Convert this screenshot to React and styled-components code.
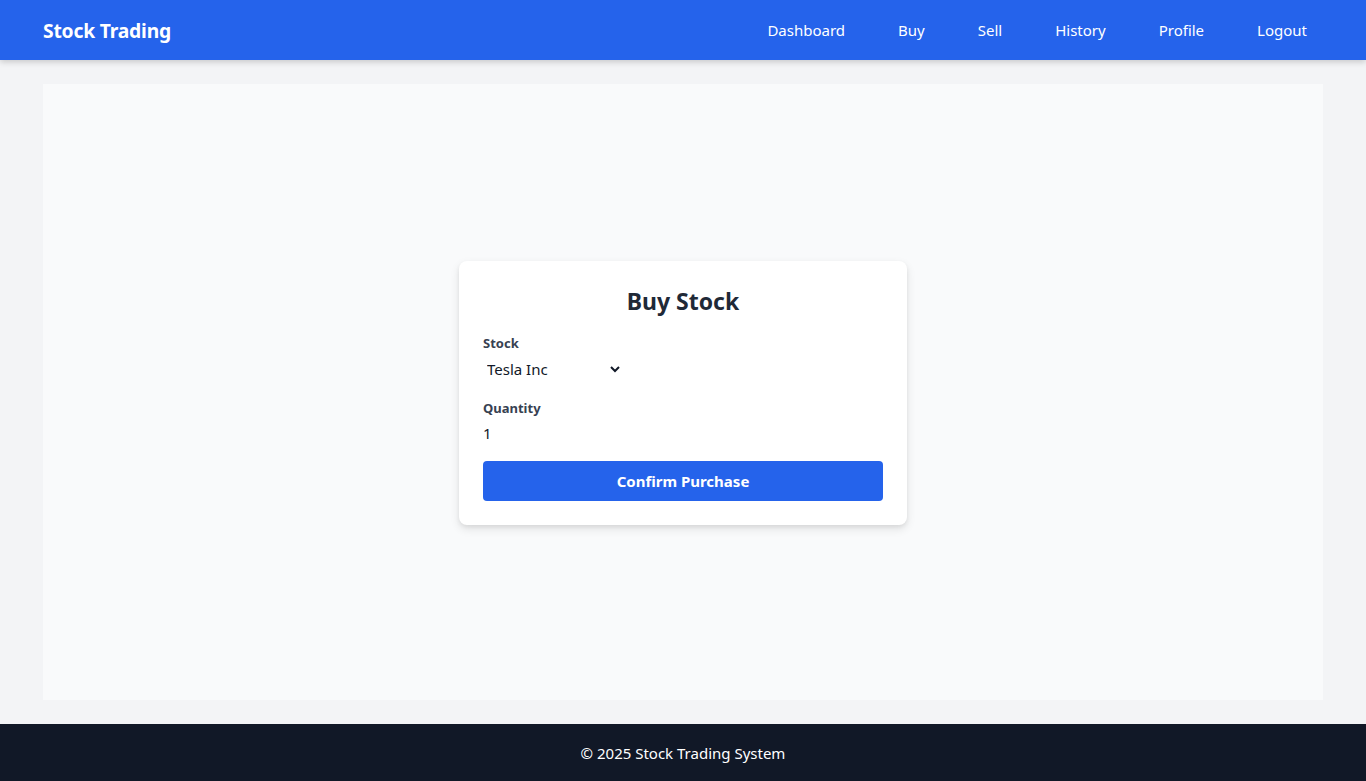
import React from "react";
import styled, { createGlobalStyle } from "styled-components";

const Global = createGlobalStyle`
  * { box-sizing: border-box; }
  html, body { margin: 0; padding: 0; }
  body {
    font-family: "Noto Sans", "Open Sans", sans-serif;
    background: #f3f4f6;
    color: #111827;
  }
`;

const Page = styled.div`
  min-height: 100vh;
  display: flex;
  flex-direction: column;
`;

const NavBar = styled.header`
  height: 60px;
  background: #2563eb;
  box-shadow: 0 2px 6px rgba(0, 0, 0, 0.18);
  display: flex;
  align-items: center;
  justify-content: space-between;
  padding: 0 43px;
  position: relative;
  z-index: 1;
`;

const Brand = styled.div`
  color: #ffffff;
  font-weight: 700;
  font-size: 19.3px;
  letter-spacing: -0.2px;
`;

const NavLinks = styled.nav`
  display: flex;
  gap: 21px;
`;

const NavLink = styled.a`
  color: #ffffff;
  font-size: 15px;
  padding: 8px 16px;
  text-decoration: none;
  cursor: pointer;
`;

const Main = styled.main`
  flex: 1;
  padding: 24px 0;
  display: flex;
  justify-content: center;
`;

const Panel = styled.section`
  width: 1280px;
  background: #f9fafb;
  display: flex;
  align-items: center;
  justify-content: center;
`;

const Card = styled.div`
  width: 448px;
  background: #ffffff;
  border-radius: 8px;
  padding: 24px;
  box-shadow: 0 4px 10px rgba(0, 0, 0, 0.1), 0 2px 4px rgba(0, 0, 0, 0.06);
  margin-top: 2px;
`;

const Title = styled.h2`
  margin: 0 0 16px;
  text-align: center;
  font-size: 23px;
  line-height: 32px;
  font-weight: 700;
  color: #1f2937;
`;

const Form = styled.form`
  display: flex;
  flex-direction: column;
  gap: 16px;
`;

const Field = styled.div`
  display: flex;
  flex-direction: column;
  align-items: flex-start;
  gap: 3px;
`;

const Label = styled.label`
  font-size: 13px;
  line-height: 20px;
  font-weight: 700;
  color: #374151;
`;

const Select = styled.select`
  font-family: inherit;
  font-size: 15px;
  color: #111827;
  border: none;
  background: #ffffff;
  width: 140px;
  height: 26px;
  padding: 0;
  outline: none;
`;

const Input = styled.input`
  font-family: inherit;
  font-size: 15px;
  color: #111827;
  border: none;
  background: transparent;
  padding: 0;
  height: 24px;
  width: 100%;
  outline: none;
`;

const Button = styled.button`
  height: 40px;
  width: 100%;
  border: none;
  border-radius: 4px;
  background: #2563eb;
  color: #ffffff;
  font-family: inherit;
  font-size: 15px;
  font-weight: 700;
  cursor: pointer;
`;

const Footer = styled.footer`
  height: 57px;
  background: #111827;
  color: #ffffff;
  display: flex;
  align-items: center;
  justify-content: center;
  font-size: 15px;
`;

const links = ["Dashboard", "Buy", "Sell", "History", "Profile", "Logout"];

export default function App() {
  return (
    <Page>
      <Global />
      <NavBar>
        <Brand>Stock Trading</Brand>
        <NavLinks>
          {links.map((l) => (
            <NavLink key={l}>{l}</NavLink>
          ))}
        </NavLinks>
      </NavBar>
      <Main>
        <Panel>
          <Card>
            <Title>Buy Stock</Title>
            <Form onSubmit={(e) => e.preventDefault()}>
              <Field>
                <Label>Stock</Label>
                <Select defaultValue="TSLA">
                  <option value="AAPL">Apple Inc</option>
                  <option value="TSLA">Tesla Inc</option>
                  <option value="MSFT">Microsoft</option>
                </Select>
              </Field>
              <Field>
                <Label>Quantity</Label>
                <Input type="number" defaultValue={1} min={1} />
              </Field>
              <Button type="submit">Confirm Purchase</Button>
            </Form>
          </Card>
        </Panel>
      </Main>
      <Footer>© 2025 Stock Trading System</Footer>
    </Page>
  );
}
